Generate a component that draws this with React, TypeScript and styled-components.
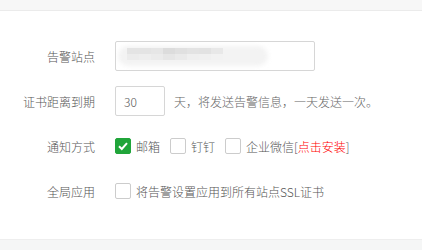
import styled, { createGlobalStyle } from "styled-components";

const GlobalStyle = createGlobalStyle`
  html, body {
    margin: 0;
    padding: 0;
    background: #fff;
  }
  body {
    font-family: "Noto Sans CJK SC", "Microsoft YaHei", "Liberation Sans", sans-serif;
    font-size: 12px;
    font-weight: 300;
    color: #555;
  }
`;

const Page = styled.div`
  width: 422px;
  height: 250px;
  display: flex;
  flex-direction: column;
  overflow: hidden;
`;

const TopBar = styled.div`
  height: 10px;
  background: #f7f7f7;
  border-bottom: 1px solid #ebebeb;
`;

const Form = styled.div`
  flex: 1;
  padding-top: 30px;
  display: flex;
  flex-direction: column;
  gap: 15px;
`;

const Row = styled.div`
  display: flex;
  align-items: center;
  height: 30px;
`;

const Label = styled.div`
  width: 95px;
  text-align: right;
  margin-right: 20px;
  color: #555;
  flex-shrink: 0;
`;

const Field = styled.div`
  display: flex;
  align-items: center;
`;

const Input = styled.div<{ $width: number }>`
  box-sizing: border-box;
  width: ${(p) => p.$width}px;
  height: 30px;
  border: 1px solid #d6d6d6;
  border-radius: 2px;
  padding: 0 8px;
  display: flex;
  align-items: center;
  color: #555;
  background: #fff;
  position: relative;
  overflow: hidden;
`;

/* blurred-out site name: a soft blob with a mosaic on top */
const Smudge = styled.div`
  position: absolute;
  left: 2px;
  top: 4px;
  width: 150px;
  height: 20px;
  border-radius: 10px;
  background: #f3f3f3;
  filter: blur(2px);
`;

const Mosaic = styled.div`
  position: absolute;
  left: 11px;
  top: 6px;
  display: grid;
  grid-template-columns: repeat(8, 12px);
  grid-template-rows: repeat(2, 6px);
`;

const Tile = styled.span<{ $shade: string }>`
  background: ${(p) => p.$shade};
`;

const Hint = styled.span`
  margin-left: 9px;
  color: #666;
`;

const Check = styled.label`
  display: flex;
  align-items: center;
  margin-right: 10px;
  color: #555;
`;

const Box = styled.span<{ $checked?: boolean }>`
  box-sizing: border-box;
  width: 16px;
  height: 16px;
  border-radius: 2px;
  border: 1px solid ${(p) => (p.$checked ? "#20a53a" : "#cccccc")};
  background: ${(p) => (p.$checked ? "#20a53a" : "#fff")};
  margin-right: 5px;
  display: flex;
  align-items: center;
  justify-content: center;
`;

const Link = styled.span`
  color: #f00;
`;

const BottomBar = styled.div`
  height: 10px;
  background: #f5f6f6;
  border-top: 1px solid #eeeeee;
`;

const Tick = () => (
  <svg width="12" height="12" viewBox="0 0 12 12">
    <path d="M2 6.2 L4.8 9 L10 3.2" fill="none" stroke="#fff" strokeWidth="2" />
  </svg>
);

const tiles = [
  "#e4e4e4", "#e4e4e4", "#e6e6e6", "#dcdcdc", "#e0e0e0", "#e3e3e3", "#e2e2e2", "#e8e8e8",
  "#ececec", "#eeeeee", "#ebebeb", "#e6e6e6", "#eaeaea", "#efefef", "#f0f0f0", "#f2f2f2",
];

export default function App() {
  return (
    <Page>
      <GlobalStyle />
      <TopBar />
      <Form>
        <Row>
          <Label>告警站点</Label>
          <Input $width={200}>
            <Smudge />
            <Mosaic>
              {tiles.map((shade, i) => (
                <Tile key={i} $shade={shade} />
              ))}
            </Mosaic>
          </Input>
        </Row>
        <Row>
          <Label>证书距离到期</Label>
          <Field>
            <Input $width={50}>30</Input>
            <Hint>天，将发送告警信息，一天发送一次。</Hint>
          </Field>
        </Row>
        <Row>
          <Label>通知方式</Label>
          <Field>
            <Check>
              <Box $checked>
                <Tick />
              </Box>
              邮箱
            </Check>
            <Check>
              <Box />
              钉钉
            </Check>
            <Check>
              <Box />
              企业微信[<Link>点击安装</Link>]
            </Check>
          </Field>
        </Row>
        <Row>
          <Label>全局应用</Label>
          <Check>
            <Box />
            将告警设置应用到所有站点SSL证书
          </Check>
        </Row>
      </Form>
      <BottomBar />
    </Page>
  );
}
